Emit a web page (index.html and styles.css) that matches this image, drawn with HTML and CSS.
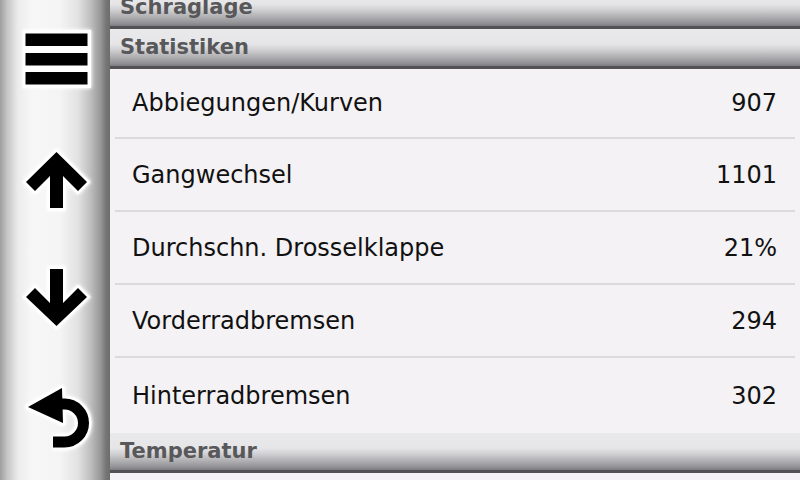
FILE: index.html
```html
<!DOCTYPE html>
<html lang="de">
<head>
<meta charset="utf-8">
<title>Statistiken</title>
<link rel="stylesheet" href="styles.css">
</head>
<body>
<div class="screen">
  <nav class="sidebar">
    <div class="btn">
      <svg class="icon" viewBox="0 0 80 80" width="80" height="80">
        <rect x="7" y="10" width="68" height="58" fill="#fff"/>
        <rect x="9.5" y="13.5" width="62" height="12.5" fill="#000"/>
        <rect x="9.5" y="33" width="62" height="12.5" fill="#000"/>
        <rect x="9.5" y="52" width="62" height="12.5" fill="#000"/>
      </svg>
    </div>
    <div class="btn">
      <svg class="icon" viewBox="0 0 80 80" width="80" height="80">
        <polygon class="outline" points="40.5,12 71,42 62,51 47,36 47,68 34,68 34,36 19,51 10,42"/>
      </svg>
    </div>
    <div class="btn">
      <svg class="icon" viewBox="0 0 80 80" width="80" height="80">
        <polygon class="outline" points="40.5,66 71,37 62,28 47,43 47,9 34,9 34,43 19,28 10,37"/>
      </svg>
    </div>
    <div class="btn">
      <svg class="icon" viewBox="0 0 80 80" width="80" height="80">
        <path d="M44 24 H48.5 A19 19 0 0 1 48.5 62 H37" fill="none" stroke="#fff" stroke-width="16"/>
        <polygon points="12,27 46,8 47,43" fill="#fff" stroke="#fff" stroke-width="5" stroke-linejoin="round"/>
        <path d="M44 24 H48.5 A19 19 0 0 1 48.5 62 H37" fill="none" stroke="#000" stroke-width="11"/>
        <polygon points="12,27 46,8 47,43" fill="#000"/>
      </svg>
    </div>
  </nav>
  <main class="list">
    <div class="section first">Schraglage</div>
    <div class="section">Statistiken</div>
    <div class="row r1"><span>Abbiegungen/Kurven</span><span>907</span></div>
    <div class="row"><span>Gangwechsel</span><span>1101</span></div>
    <div class="row"><span>Durchschn. Drosselklappe</span><span>21%</span></div>
    <div class="row"><span>Vorderradbremsen</span><span>294</span></div>
    <div class="row last"><span>Hinterradbremsen</span><span>302</span></div>
    <div class="section">Temperatur</div>
    <div class="row tail"></div>
  </main>
</div>
</body>
</html>
```

FILE: styles.css
```css
html, body {
  margin: 0;
  padding: 0;
}

body {
  width: 800px;
  height: 480px;
  overflow: hidden;
  background: #f3f2f4;
  font-family: "DejaVu Sans", "Liberation Sans", sans-serif;
}

.screen {
  display: flex;
  width: 800px;
  height: 480px;
  overflow: hidden;
}

.sidebar {
  flex: 0 0 110px;
  display: flex;
  flex-direction: column;
  background: linear-gradient(to right,
    #9e9e9e 0px,
    #c4c4c4 7px,
    #ececec 18px,
    #f7f7f7 32px,
    #f4f4f4 60px,
    #e2e2e2 78px,
    #c0c0c0 90px,
    #9a9a9a 100px,
    #767676 106px,
    #6c6c6c 110px);
}

.btn {
  flex: 1;
  display: flex;
  align-items: center;
  justify-content: center;
  padding-left: 2px;
}

.icon {
  display: block;
  overflow: visible;
  filter: drop-shadow(0 0 1.5px rgba(255, 255, 255, 0.95)) drop-shadow(0 0 2px rgba(255, 255, 255, 0.6));
}

.outline {
  fill: #000;
  stroke: #fff;
  stroke-width: 5;
  stroke-linejoin: miter;
  paint-order: stroke;
}

.list {
  flex: 1;
  display: flex;
  flex-direction: column;
  background: #f4f2f4;
  overflow: hidden;
}

.section {
  flex: 0 0 auto;
  height: 37px;
  line-height: 37px;
  border-bottom: 3px solid #525256;
  padding-left: 10px;
  background: linear-gradient(to bottom,
    #e9e8ea 0px,
    #e6e5e7 15px,
    #d0d0d2 21px,
    #afafb2 28px,
    #939397 34px,
    #7c7c80 37px);
  color: #58585a;
  font-size: 21px;
  font-weight: bold;
  white-space: nowrap;
}

.first {
  margin-top: -11px;
}

.row {
  flex: 0 0 auto;
  display: flex;
  justify-content: space-between;
  align-items: center;
  height: 71px;
  margin: 0 5px;
  padding: 0 18px 0 17px;
  border-bottom: 2px solid #dbdadc;
  color: #111;
  font-size: 24px;
  white-space: nowrap;
}

.r1 {
  height: 68px;
}

.last {
  height: 75px;
  border-bottom: none;
}

.tail {
  height: 20px;
  border-bottom: none;
}
```
